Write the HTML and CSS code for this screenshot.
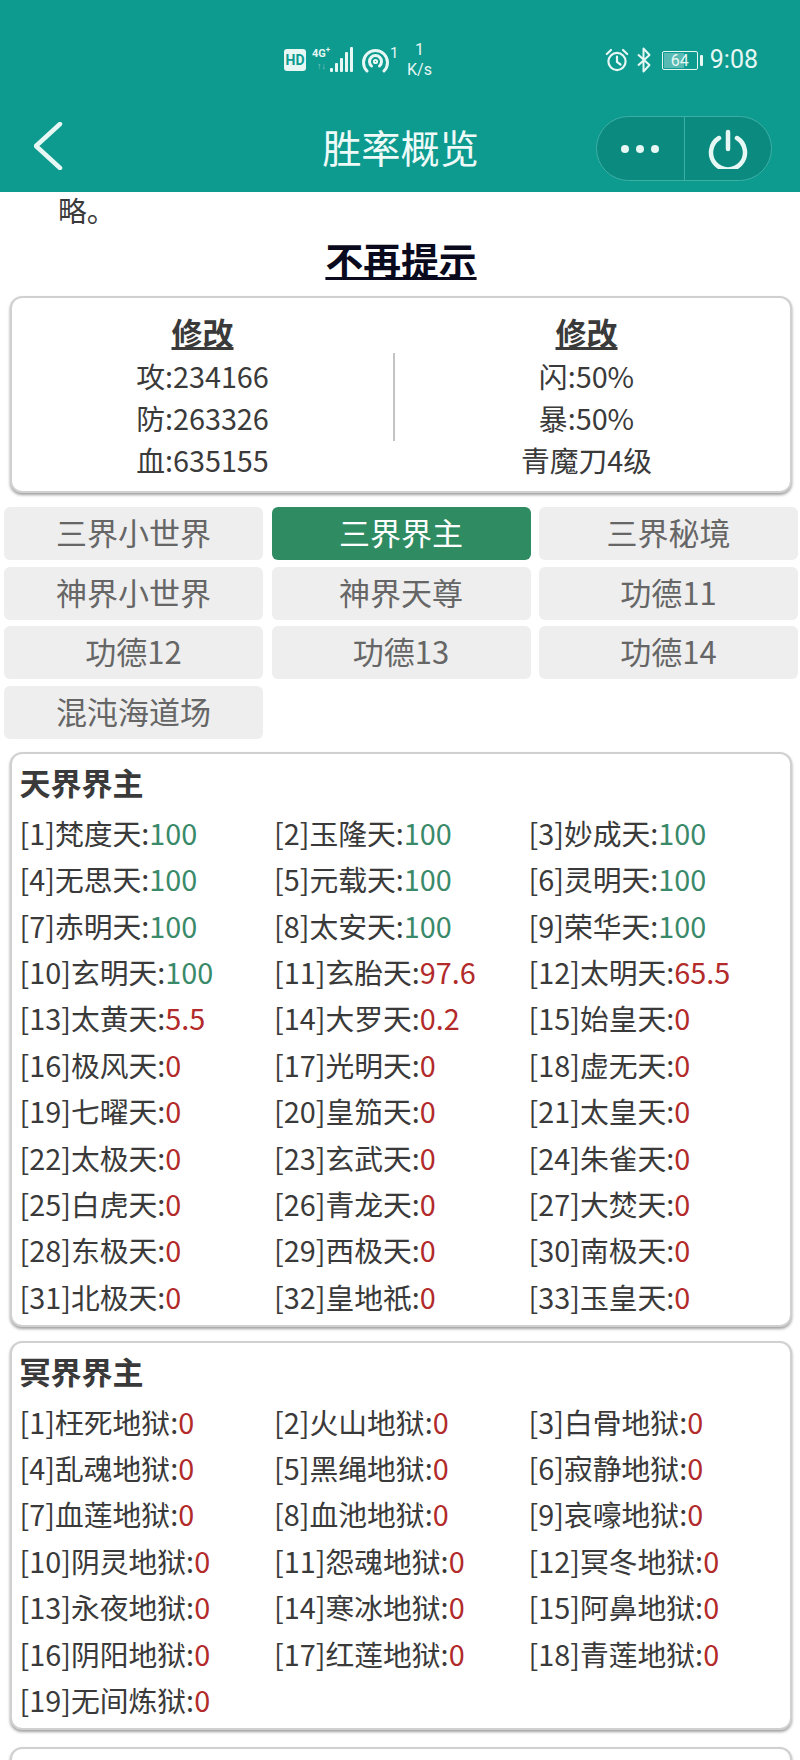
FILE: index.html
```html
<!DOCTYPE html>
<html lang="zh-CN">
  <head>
    <meta charset="UTF-8" />
    <meta name="viewport" content="width=device-width, initial-scale=1.0" />
    <title>胜率概览</title>
    <link rel="stylesheet" href="styles.css">
  </head>
  <body>
    <div class="page">
      <div class="status">
        <div class="status-group">
          <span class="hd">HD</span>
          <span class="net">
            <span class="net-type">4G<sup>+</sup></span>
            <span class="net-arrows">↑↓</span>
          </span>
          <svg class="signal" width="23" height="26" viewBox="0 0 23 26">
            <rect x="0" y="21" width="3" height="4" rx="1" />
            <rect x="5" y="16" width="3" height="9" rx="1" />
            <rect x="10" y="11" width="3" height="14" rx="1" />
            <rect x="15" y="5" width="3" height="20" rx="1" />
            <rect x="20" y="0" width="3" height="25" rx="1" />
          </svg>
          <svg class="hotspot" width="27" height="27" viewBox="0 0 27 27" fill="none" stroke="#e6f7f4" stroke-width="3" stroke-linecap="round">
            <path d="M5 24a12 12 0 1 1 17 0" />
            <path d="M9.5 19a6 6 0 1 1 8 0" />
            <circle cx="13.5" cy="14.5" r="1.6" stroke-width="2" />
          </svg>
          <span class="hotspot-num">1</span>
          <span class="speed">1<br>K/s</span>
        </div>
        <div class="status-group right">
          <svg width="24" height="24" viewBox="0 0 24 24" fill="none" stroke="#e6f7f4" stroke-width="2.2" stroke-linecap="round">
            <circle cx="12" cy="13.5" r="8.6" />
            <path d="M12 8.5v5.5l3.5 2.5" />
            <path d="M1.8 6 6 2M22.2 6 18 2" />
          </svg>
          <svg width="14" height="26" viewBox="0 0 14 26" fill="none" stroke="#e6f7f4" stroke-width="2" stroke-linejoin="round">
            <path d="M1 7.5 12.5 18 6.5 24.5V1.5L12.5 8 1 18.5" />
          </svg>
          <div class="battery">
            <div class="battery-box"><span class="battery-level"></span><span class="battery-num">64</span></div>
            <span class="battery-tip"></span>
          </div>
          <span class="clock">9:08</span>
        </div>
      </div>

      <div class="nav">
        <svg class="back" width="30" height="48" viewBox="0 0 30 48" fill="none" stroke="#e6f7f4" stroke-width="4.5" stroke-linecap="round" stroke-linejoin="round">
          <path d="M26 2 2 24l24 22" />
        </svg>
        <div class="nav-title">胜率概览</div>
        <div class="capsule">
          <div class="capsule-btn"><span class="dot"></span><span class="dot"></span><span class="dot"></span></div>
          <div class="capsule-btn">
            <svg width="40" height="40" viewBox="0 0 40 40" fill="none" stroke="#e6f7f4" stroke-width="4.5" stroke-linecap="round">
              <path d="M11 9a17 17 0 1 0 18 0" />
              <path d="M20 3v17" />
            </svg>
          </div>
        </div>
      </div>

      <div class="notice">略。</div>
      <div class="dismiss"><span>不再提示</span></div>

      <div class="card stats">
        <div class="stats-col">
          <div class="edit">修改</div>
          <div>攻:234166</div>
          <div>防:263326</div>
          <div>血:635155</div>
        </div>
        <div class="stats-line"></div>
        <div class="stats-col wide">
          <div class="edit">修改</div>
          <div>闪:50%</div>
          <div>暴:50%</div>
          <div>青魔刀4级</div>
        </div>
      </div>

      <div class="tabs">
        <div class="tab">三界小世界</div>
        <div class="tab active">三界界主</div>
        <div class="tab">三界秘境</div>
        <div class="tab">神界小世界</div>
        <div class="tab">神界天尊</div>
        <div class="tab">功德11</div>
        <div class="tab">功德12</div>
        <div class="tab">功德13</div>
        <div class="tab">功德14</div>
        <div class="tab">混沌海道场</div>
      </div>

      <div class="card group">
        <div class="group-title">天界界主</div>
        <div class="list">
          <div>[1]梵度天:<span class="win">100</span></div>
          <div>[2]玉隆天:<span class="win">100</span></div>
          <div>[3]妙成天:<span class="win">100</span></div>
          <div>[4]无思天:<span class="win">100</span></div>
          <div>[5]元载天:<span class="win">100</span></div>
          <div>[6]灵明天:<span class="win">100</span></div>
          <div>[7]赤明天:<span class="win">100</span></div>
          <div>[8]太安天:<span class="win">100</span></div>
          <div>[9]荣华天:<span class="win">100</span></div>
          <div>[10]玄明天:<span class="win">100</span></div>
          <div>[11]玄胎天:<span class="lose">97.6</span></div>
          <div>[12]太明天:<span class="lose">65.5</span></div>
          <div>[13]太黄天:<span class="lose">5.5</span></div>
          <div>[14]大罗天:<span class="lose">0.2</span></div>
          <div>[15]始皇天:<span class="lose">0</span></div>
          <div>[16]极风天:<span class="lose">0</span></div>
          <div>[17]光明天:<span class="lose">0</span></div>
          <div>[18]虚无天:<span class="lose">0</span></div>
          <div>[19]七曜天:<span class="lose">0</span></div>
          <div>[20]皇笳天:<span class="lose">0</span></div>
          <div>[21]太皇天:<span class="lose">0</span></div>
          <div>[22]太极天:<span class="lose">0</span></div>
          <div>[23]玄武天:<span class="lose">0</span></div>
          <div>[24]朱雀天:<span class="lose">0</span></div>
          <div>[25]白虎天:<span class="lose">0</span></div>
          <div>[26]青龙天:<span class="lose">0</span></div>
          <div>[27]大焚天:<span class="lose">0</span></div>
          <div>[28]东极天:<span class="lose">0</span></div>
          <div>[29]西极天:<span class="lose">0</span></div>
          <div>[30]南极天:<span class="lose">0</span></div>
          <div>[31]北极天:<span class="lose">0</span></div>
          <div>[32]皇地祇:<span class="lose">0</span></div>
          <div>[33]玉皇天:<span class="lose">0</span></div>
        </div>
      </div>

      <div class="card group">
        <div class="group-title">冥界界主</div>
        <div class="list">
          <div>[1]枉死地狱:<span class="lose">0</span></div>
          <div>[2]火山地狱:<span class="lose">0</span></div>
          <div>[3]白骨地狱:<span class="lose">0</span></div>
          <div>[4]乱魂地狱:<span class="lose">0</span></div>
          <div>[5]黑绳地狱:<span class="lose">0</span></div>
          <div>[6]寂静地狱:<span class="lose">0</span></div>
          <div>[7]血莲地狱:<span class="lose">0</span></div>
          <div>[8]血池地狱:<span class="lose">0</span></div>
          <div>[9]哀嚎地狱:<span class="lose">0</span></div>
          <div>[10]阴灵地狱:<span class="lose">0</span></div>
          <div>[11]怨魂地狱:<span class="lose">0</span></div>
          <div>[12]冥冬地狱:<span class="lose">0</span></div>
          <div>[13]永夜地狱:<span class="lose">0</span></div>
          <div>[14]寒冰地狱:<span class="lose">0</span></div>
          <div>[15]阿鼻地狱:<span class="lose">0</span></div>
          <div>[16]阴阳地狱:<span class="lose">0</span></div>
          <div>[17]红莲地狱:<span class="lose">0</span></div>
          <div>[18]青莲地狱:<span class="lose">0</span></div>
          <div>[19]无间炼狱:<span class="lose">0</span></div>
        </div>
      </div>

      <div class="card next"></div>
    </div>
  </body>
</html>
```

FILE: styles.css
```css
* {
  margin: 0;
  padding: 0;
  box-sizing: border-box;
}
html,
body {
  background: #fff;
  overflow: hidden;
}
.page {
  width: 800px;
  height: 1760px;
  overflow: hidden;
  font-family: "Noto Sans CJK SC", "Noto Sans", sans-serif;
  font-size: 28.8px;
  color: #3a3a3a;
}

/* status bar */
.status {
  height: 100px;
  padding: 20px 42px 0 284px;
  background: #0d9a8f;
  color: #e6f7f4;
  display: flex;
  justify-content: space-between;
  align-items: center;
}
.status-group {
  display: flex;
  align-items: center;
  font-family: "Roboto", sans-serif;
}
.status-group:first-child {
  height: 42px;
}
.status-group.right {
  gap: 8px;
}
.hd {
  width: 22px;
  height: 22px;
  border-radius: 3px;
  background: #e6f7f4;
  color: #0d9a8f;
  font-size: 14px;
  font-weight: 700;
  line-height: 22px;
  text-align: center;
}
.net {
  width: 20px;
  margin-left: 6px;
  display: flex;
  flex-direction: column;
  font-size: 11px;
  font-weight: 700;
  line-height: 12px;
}
.net sup {
  font-size: 8px;
  line-height: 0;
}
.net-arrows {
  font-size: 9px;
  font-weight: 400;
  opacity: 0.5;
  padding-left: 5px;
}
.signal {
  fill: #e6f7f4;
  margin-left: -2px;
}
.hotspot {
  margin-left: 9px;
}
.hotspot-num {
  font-size: 15px;
  align-self: flex-start;
  margin: 4px 0 0 1px;
  line-height: 20px;
}
.speed {
  width: 28px;
  margin-left: 7px;
  font-size: 16px;
  line-height: 20px;
  text-align: center;
}
.battery {
  display: flex;
  align-items: center;
  gap: 2px;
  margin-left: 3px;
}
.battery-box {
  width: 36px;
  height: 19px;
  border: 1px solid #e6f7f4;
  border-radius: 2px;
  padding: 1px;
  position: relative;
}
.battery-level {
  display: block;
  width: 64%;
  height: 100%;
  background: rgba(230, 247, 244, 0.35);
}
.battery-num {
  position: absolute;
  left: 0;
  right: 0;
  top: 0;
  font-size: 16px;
  line-height: 17px;
  text-align: center;
}
.battery-tip {
  width: 3px;
  height: 11px;
  border-radius: 1px;
  background: #e6f7f4;
}
.clock {
  font-size: 25px;
  line-height: 30px;
  margin-left: -1px;
}

/* title bar */
.nav {
  height: 92px;
  padding: 0 28px;
  background: #0d9a8f;
  display: grid;
  grid-template-columns: 1fr auto 1fr;
  align-items: center;
}
.back {
  margin-left: 6px;
}
.nav-title {
  font-size: 39.2px;
  color: #eefaf8;
  line-height: 50px;
  margin-left: 1px;
}
.capsule {
  justify-self: end;
  width: 176px;
  height: 65px;
  margin-top: 5px;
  border: 1px solid #3db0a6;
  border-radius: 33px;
  background: #0b8a80;
  display: flex;
}
.capsule-btn {
  flex: 1;
  display: flex;
  align-items: center;
  justify-content: center;
  gap: 7px;
}
.capsule-btn + .capsule-btn {
  border-left: 1px solid #3db0a6;
}
.dot {
  width: 8px;
  height: 8px;
  border-radius: 50%;
  background: #e6f7f4;
}

.notice {
  padding-left: 58px;
  line-height: 35px;
}
.dismiss {
  margin-top: 11.5px;
  padding-left: 2px;
  text-align: center;
  font-size: 37.8px;
  font-weight: 700;
  color: #0a0a1e;
  line-height: 40px;
}
.dismiss span {
  text-decoration: underline;
}

/* cards */
.card {
  margin: 13.3px 8px 0 10px;
  border: 2px solid #d0d0d0;
  border-radius: 12px;
  background: #fff;
  box-shadow: 0 2px 3px #a0a0a0;
}
.stats {
  height: 197px;
  margin-top: 17.5px;
  padding-top: 10.5px;
  display: flex;
  align-items: flex-start;
}
.stats-col {
  width: 381px;
  text-align: center;
  line-height: 42px;
}
.stats-col.wide {
  width: 383px;
}
.stats-line {
  width: 2px;
  height: 88px;
  background: #c4c4c4;
  margin-top: 44px;
}
.edit {
  font-size: 31px;
  font-weight: 700;
  text-decoration: underline;
  line-height: 46px;
}

.tabs {
  margin: 14px 3px 0 4px;
  display: grid;
  grid-template-columns: repeat(3, 259px);
  gap: 6.7px 8.5px;
}
.tab {
  height: 53px;
  border-radius: 6px;
  background: #eee;
  color: #666;
  font-size: 31px;
  line-height: 49px;
  text-align: center;
}
.tab.active {
  background: #2e8b62;
  color: #fff;
}

.group {
  padding: 6px 0 5px 7.5px;
}
.tabs + .group {
  margin-top: 12.7px;
}
.next {
  height: 100px;
  margin-top: 16.5px;
}
.group-title {
  font-size: 31px;
  font-weight: 700;
  line-height: 44px;
  margin-bottom: 6px;
}
.list {
  display: grid;
  grid-template-columns: repeat(3, 254.5px);
  line-height: 46.4px;
}
.win {
  color: #3a8a6a;
}
.lose {
  color: #b22a2a;
}
```
